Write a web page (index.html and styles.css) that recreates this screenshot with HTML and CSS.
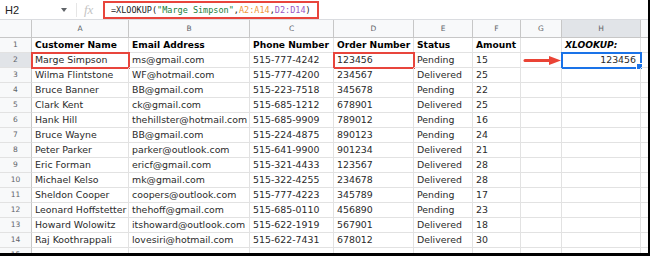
FILE: index.html
```html
<!DOCTYPE html>
<html lang="en">
<head>
    <meta charset="UTF-8">
    <meta name="viewport" content="width=device-width, initial-scale=1.0">
    <title>XLOOKUP - Sheet</title>
    <link rel="stylesheet" href="styles.css">
</head>
<body>
    <div class="frame">
        <!-- formula bar -->
        <div class="formula-bar">
            <div class="name-box">H2</div>
            <span class="caret"></span>
            <span class="divider"></span>
            <span class="fx">fx</span>
            <div class="formula">=XLOOKUP(<span class="f-str">"Marge Simpson"</span>,<span class="f-ref1">A2:A14</span>,<span class="f-ref2">D2:D14</span>)</div>
        </div>

        <!-- sheet grid -->
        <div class="sheet">
            <div class="corner"></div>
            <div class="col-head">A</div>
            <div class="col-head">B</div>
            <div class="col-head">C</div>
            <div class="col-head">D</div>
            <div class="col-head">E</div>
            <div class="col-head">F</div>
            <div class="col-head">G</div>
            <div class="col-head picked">H</div>
            <div class="col-head"></div>

            <div class="row-head">1</div>
            <div class="cell head">Customer Name</div>
            <div class="cell head">Email Address</div>
            <div class="cell head">Phone Number</div>
            <div class="cell head">Order Number</div>
            <div class="cell head">Status</div>
            <div class="cell head">Amount</div>
            <div class="cell"></div>
            <div class="cell head lookup">XLOOKUP:</div>
            <div class="cell"></div>

            <div class="row-head picked">2</div>
            <div class="cell hit">Marge Simpson</div>
            <div class="cell">ms@gmail.com</div>
            <div class="cell">515-777-4242</div>
            <div class="cell hit">123456</div>
            <div class="cell">Pending</div>
            <div class="cell">15</div>
            <div class="cell arrow-cell">
                <svg class="arrow" width="38" height="11" viewBox="0 0 38 11">
                    <line x1="2" y1="5.5" x2="28" y2="5.5" stroke="#ea4335" stroke-width="3" stroke-linecap="round"/>
                    <polygon points="26,1 38,5.5 26,10" fill="#ea4335"/>
                </svg>
            </div>
            <div class="cell selected num">123456</div>
            <div class="cell"></div>

            <div class="row-head">3</div>
            <div class="cell">Wilma Flintstone</div>
            <div class="cell">WF@hotmail.com</div>
            <div class="cell">515-777-4200</div>
            <div class="cell">234567</div>
            <div class="cell">Delivered</div>
            <div class="cell">25</div>
            <div class="cell"></div><div class="cell"></div><div class="cell"></div>

            <div class="row-head">4</div>
            <div class="cell">Bruce Banner</div>
            <div class="cell">BB@gmail.com</div>
            <div class="cell">515-223-7518</div>
            <div class="cell">345678</div>
            <div class="cell">Pending</div>
            <div class="cell">22</div>
            <div class="cell"></div><div class="cell"></div><div class="cell"></div>

            <div class="row-head">5</div>
            <div class="cell">Clark Kent</div>
            <div class="cell">ck@gmail.com</div>
            <div class="cell">515-685-1212</div>
            <div class="cell">678901</div>
            <div class="cell">Delivered</div>
            <div class="cell">25</div>
            <div class="cell"></div><div class="cell"></div><div class="cell"></div>

            <div class="row-head">6</div>
            <div class="cell">Hank Hill</div>
            <div class="cell">thehillster@hotmail.com</div>
            <div class="cell">515-685-9909</div>
            <div class="cell">789012</div>
            <div class="cell">Pending</div>
            <div class="cell">16</div>
            <div class="cell"></div><div class="cell"></div><div class="cell"></div>

            <div class="row-head">7</div>
            <div class="cell">Bruce Wayne</div>
            <div class="cell">BB@gmail.com</div>
            <div class="cell">515-224-4875</div>
            <div class="cell">890123</div>
            <div class="cell">Pending</div>
            <div class="cell">24</div>
            <div class="cell"></div><div class="cell"></div><div class="cell"></div>

            <div class="row-head">8</div>
            <div class="cell">Peter Parker</div>
            <div class="cell">parker@outlook.com</div>
            <div class="cell">515-641-9900</div>
            <div class="cell">901234</div>
            <div class="cell">Delivered</div>
            <div class="cell">21</div>
            <div class="cell"></div><div class="cell"></div><div class="cell"></div>

            <div class="row-head">9</div>
            <div class="cell">Eric Forman</div>
            <div class="cell">ericf@gmail.com</div>
            <div class="cell">515-321-4433</div>
            <div class="cell">123567</div>
            <div class="cell">Delivered</div>
            <div class="cell">28</div>
            <div class="cell"></div><div class="cell"></div><div class="cell"></div>

            <div class="row-head">10</div>
            <div class="cell">Michael Kelso</div>
            <div class="cell">mk@gmail.com</div>
            <div class="cell">515-322-4255</div>
            <div class="cell">234678</div>
            <div class="cell">Delivered</div>
            <div class="cell">28</div>
            <div class="cell"></div><div class="cell"></div><div class="cell"></div>

            <div class="row-head">11</div>
            <div class="cell">Sheldon Cooper</div>
            <div class="cell">coopers@outlook.com</div>
            <div class="cell">515-777-4223</div>
            <div class="cell">345789</div>
            <div class="cell">Pending</div>
            <div class="cell">17</div>
            <div class="cell"></div><div class="cell"></div><div class="cell"></div>

            <div class="row-head">12</div>
            <div class="cell">Leonard Hoffstetter</div>
            <div class="cell">thehoff@gmail.com</div>
            <div class="cell">515-685-0110</div>
            <div class="cell">456890</div>
            <div class="cell">Pending</div>
            <div class="cell">23</div>
            <div class="cell"></div><div class="cell"></div><div class="cell"></div>

            <div class="row-head">13</div>
            <div class="cell">Howard Wolowitz</div>
            <div class="cell">itshoward@outlook.com</div>
            <div class="cell">515-622-1919</div>
            <div class="cell">567901</div>
            <div class="cell">Delivered</div>
            <div class="cell">18</div>
            <div class="cell"></div><div class="cell"></div><div class="cell"></div>

            <div class="row-head">14</div>
            <div class="cell">Raj Koothrappali</div>
            <div class="cell">lovesiri@hotmail.com</div>
            <div class="cell">515-622-7431</div>
            <div class="cell">678012</div>
            <div class="cell">Delivered</div>
            <div class="cell">30</div>
            <div class="cell"></div><div class="cell"></div><div class="cell"></div>

            <div class="row-head">15</div>
            <div class="cell"></div><div class="cell"></div><div class="cell"></div>
            <div class="cell"></div><div class="cell"></div><div class="cell"></div>
            <div class="cell"></div><div class="cell"></div><div class="cell"></div>
        </div>
    </div>
</body>
</html>
```

FILE: styles.css
```css
* {
    margin: 0;
    padding: 0;
    box-sizing: border-box;
}

body {
    background: white;
    font-family: 'DejaVu Sans', Verdana, sans-serif;
}

.frame {
    width: 650px;
    height: 256px;
    background: white;
    border-right: 2px solid black;
    border-bottom: 3px solid black;
    overflow: hidden;
}

/* formula bar */

.formula-bar {
    display: flex;
    align-items: center;
    height: 20px;
    border-bottom: 1px solid #dadce0;
}

.name-box {
    width: 60px;
    padding-left: 5px;
    font: 11px 'Liberation Sans', Arial, sans-serif;
    color: #222;
}

.caret {
    width: 0;
    height: 0;
    margin-left: 1px;
    border-left: 3px solid transparent;
    border-right: 3px solid transparent;
    border-top: 4px solid #5f6368;
}

.divider {
    width: 1px;
    height: 14px;
    margin-left: 9px;
    background: #e6e6e6;
}

.fx {
    width: 14px;
    margin-left: 7px;
    font: italic 13px 'Liberation Serif', serif;
    color: #c4c4c4;
}

.formula {
    display: flex;
    align-items: center;
    width: 216px;
    height: 18px;
    margin-left: 5px;
    padding-left: 6px;
    border: 2px solid #e8453c;
    font-family: 'DejaVu Sans Mono', 'Liberation Mono', monospace;
    font-size: 8.5px;
    color: #222;
    white-space: pre;
}

.f-str { color: #188038; }
.f-ref1 { color: #f09637; }
.f-ref2 { color: #9b59c6; }

/* sheet */

.sheet {
    display: grid;
    grid-template-columns: 32px 97px 121px 84px 80px 59px 48px 41px 79px 40px;
    grid-template-rows: 18px;
    grid-auto-rows: 15px;
}

.corner,
.col-head,
.row-head {
    background: #f8f9fa;
    border-right: 1px solid #c7c7c7;
    border-bottom: 1px solid #c7c7c7;
    color: #5f6368;
    font-size: 7.5px;
    text-align: center;
}

.col-head {
    line-height: 17px;
}

.row-head {
    line-height: 14px;
    border-bottom-color: #e2e2e2;
}

.picked {
    background: #e1e4e8;
}

.cell {
    position: relative;
    padding: 0 3px;
    border-right: 1px solid #e2e2e2;
    border-bottom: 1px solid #e2e2e2;
    font-size: 9.4px;
    line-height: 14px;
    color: #2a2a2a;
    white-space: nowrap;
    overflow: hidden;
}

.head {
    font-size: 9.1px;
    font-weight: bold;
    color: black;
}

.lookup {
    font-style: italic;
}

.num {
    text-align: right;
    padding-right: 4px;
}

.hit {
    outline: 2px solid #e8453c;
    outline-offset: -1px;
}

.selected {
    overflow: visible;
    outline: 2px solid #1a73e8;
    outline-offset: -1px;
}

.selected::after {
    content: '';
    position: absolute;
    right: -3px;
    bottom: -3px;
    width: 5px;
    height: 5px;
    background: #1a73e8;
    border: 1px solid white;
}

.arrow-cell {
    display: flex;
    align-items: center;
    padding: 0 0 0 2px;
}

.arrow {
    display: block;
}
```
